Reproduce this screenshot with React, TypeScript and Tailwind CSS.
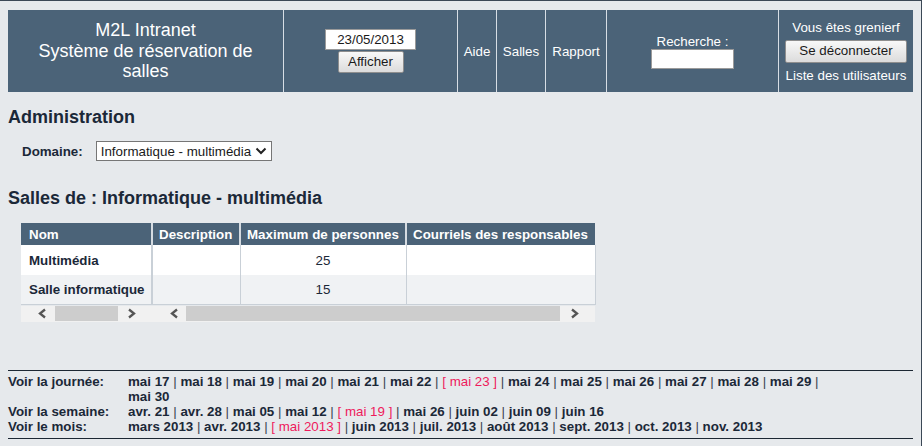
import React from "react";

const Chevron = ({ dir }: { dir: "l" | "r" }) => (
  <svg width="9" height="11" viewBox="0 0 9 11" className="block">
    <polyline
      points={dir === "l" ? "7,1.5 2,5.5 7,9.5" : "2,1.5 7,5.5 2,9.5"}
      fill="none"
      stroke="#555"
      strokeWidth="2.3"
    />
  </svg>
);

const btn =
  "h-[22px] border border-[#8e8e8e] rounded-[2px] bg-linear-to-b from-[#f8f8f8] to-[#dcdcdc] text-[#1a1a1a] text-[13.33px] leading-none flex items-center justify-center";

type Item = { t: string; cur?: boolean };

const Links = ({ items }: { items: Item[] }) => (
  <div>
    {items.map((it, i) => (
      <React.Fragment key={i}>
        {i > 0 && <span className="font-normal text-[#3a4250]"> | </span>}
        {it.cur ? (
          <span className="whitespace-nowrap font-normal text-[#ee1a5c]">[ {it.t} ]</span>
        ) : (
          <span className="whitespace-nowrap">{it.t}</span>
        )}
      </React.Fragment>
    ))}
  </div>
);

const jours: Item[] = [
  { t: "mai 17" },
  { t: "mai 18" },
  { t: "mai 19" },
  { t: "mai 20" },
  { t: "mai 21" },
  { t: "mai 22" },
  { t: "mai 23", cur: true },
  { t: "mai 24" },
  { t: "mai 25" },
  { t: "mai 26" },
  { t: "mai 27" },
  { t: "mai 28" },
  { t: "mai 29" },
  { t: "mai 30" },
];
const semaines: Item[] = [
  { t: "avr. 21" },
  { t: "avr. 28" },
  { t: "mai 05" },
  { t: "mai 12" },
  { t: "mai 19", cur: true },
  { t: "mai 26" },
  { t: "juin 02" },
  { t: "juin 09" },
  { t: "juin 16" },
];
const mois: Item[] = [
  { t: "mars 2013" },
  { t: "avr. 2013" },
  { t: "mai 2013", cur: true },
  { t: "juin 2013" },
  { t: "juil. 2013" },
  { t: "août 2013" },
  { t: "sept. 2013" },
  { t: "oct. 2013" },
  { t: "nov. 2013" },
];

export default function App() {
  return (
    <div
      className="w-[922px] min-h-[446px] bg-[#e6e9ec] border-t border-r border-[#3b4856] text-[#1b2838] text-[13.33px] leading-[15px]"
      style={{ fontFamily: '"Liberation Sans", Arial, sans-serif' }}
    >
      {/* Header */}
      <div className="mx-2 mt-[9px] flex h-[82px] w-[905px] bg-[#4b6378] text-white">
        <div className="w-[275px] flex items-center justify-center text-center text-[18px] leading-[20.5px]">
          <div>
            M2L Intranet
            <br />
            Système de réservation de
            <br />
            salles
          </div>
        </div>
        <div className="w-[174px] border-l border-[#d7dee5] flex flex-col items-center justify-center">
          <div className="w-[91px] h-[21px] bg-white border border-[#9a9a9a] text-[#1a1a1a] flex items-center justify-center">
            23/05/2013
          </div>
          <div className={`${btn} w-[66px] mt-px`}>Afficher</div>
        </div>
        <div className="w-[39px] border-l border-[#d7dee5] flex items-center justify-center">Aide</div>
        <div className="w-[49px] border-l border-[#d7dee5] flex items-center justify-center">Salles</div>
        <div className="w-[61px] border-l border-[#d7dee5] flex items-center justify-center">Rapport</div>
        <div className="w-[172px] border-l border-[#d7dee5] flex flex-col items-center justify-center">
          <div>Recherche :</div>
          <div className="w-[83px] h-[20px] bg-white border border-[#9a9a9a]" />
        </div>
        <div className="w-[135px] border-l border-[#d7dee5] flex flex-col items-center justify-center">
          <div>Vous êtes grenierf</div>
          <div className={`${btn} w-[122px] h-[23px] my-[5px]`}>Se déconnecter</div>
          <div className="whitespace-nowrap">Liste des utilisateurs</div>
        </div>
      </div>

      {/* Administration */}
      <h1 className="mx-2 mt-[15px] text-[18px] leading-[21px] font-bold">Administration</h1>
      <div className="ml-[22px] mt-[13px] flex items-center h-[20px]">
        <span className="font-bold">Domaine:</span>
        <div className="ml-[13px] w-[176px] h-[20px] bg-white border border-[#767676] flex items-center justify-between pl-[4px] pr-[4px] text-[#1a1a1a]">
          <span>Informatique - multimédia</span>
          <svg width="12" height="8" viewBox="0 0 12 8">
            <polyline points="1.5,1.5 6,6 10.5,1.5" fill="none" stroke="#222" strokeWidth="2" />
          </svg>
        </div>
      </div>

      <h2 className="mx-2 mt-[27px] text-[18px] leading-[21px] font-bold">
        Salles de : Informatique - multimédia
      </h2>

      {/* Table */}
      <div className="ml-[21px] mt-[14px] w-[574px]">
        <table className="w-[574px] table-fixed border-collapse">
          <colgroup>
            <col className="w-[131px]" />
            <col className="w-[88px]" />
            <col className="w-[166px]" />
            <col className="w-[189px]" />
          </colgroup>
          <thead>
            <tr className="h-[22px] bg-[#4b6378] text-white font-bold text-left">
              <th className="pl-2 pr-0 text-left whitespace-nowrap">Nom</th>
              <th className="pl-[6px] pr-0 text-left whitespace-nowrap border-l-2 border-[#d5dbe1]">Description</th>
              <th className="pl-[6px] pr-0 text-left whitespace-nowrap border-l-2 border-[#d5dbe1]">Maximum de personnes</th>
              <th className="pl-[6px] pr-0 text-left whitespace-nowrap border-l-2 border-[#d5dbe1]">Courriels des responsables</th>
            </tr>
          </thead>
          <tbody>
            <tr className="h-[30px] bg-white">
              <td className="pl-2 pr-0 font-bold whitespace-nowrap border-r-2 border-[#c9d0d7]">Multimédia</td>
              <td className="border-r border-[#c9d0d7]" />
              <td className="text-center border-r border-[#c9d0d7]">25</td>
              <td className="border-r border-[#c9d0d7]" />
            </tr>
            <tr className="h-[29px] bg-[#f0f2f4] border-b border-[#c9d0d7]">
              <td className="pl-2 pr-0 font-bold whitespace-nowrap border-r-2 border-[#c9d0d7]">Salle informatique</td>
              <td className="border-r border-[#c9d0d7]" />
              <td className="text-center border-r border-[#c9d0d7]">15</td>
              <td className="border-r border-[#c9d0d7]" />
            </tr>
          </tbody>
        </table>
        <div className="mt-px flex h-[16px] bg-[#f1f1f1] items-center">
          <div className="w-[131px] flex items-center h-full">
            <div className="w-[17px]" />
            <Chevron dir="l" />
            <div className="w-[8px]" />
            <div className="w-[63px] h-[15px] bg-[#cdcdcd]" />
            <div className="w-[9px]" />
            <Chevron dir="r" />
          </div>
          <div className="w-[443px] flex items-center h-full">
            <div className="w-[18px]" />
            <Chevron dir="l" />
            <div className="w-[7px]" />
            <div className="w-[374px] h-[15px] bg-[#cdcdcd]" />
            <div className="w-[10px]" />
            <Chevron dir="r" />
          </div>
        </div>
      </div>

      {/* Footer */}
      <div className="mx-2 mt-[48px] w-[905px] border-t border-b border-[#1c2733] pt-[3px] pb-[4px] font-bold">
        <div className="grid grid-cols-[120px_712px]">
          <div>Voir la journée:</div>
          <Links items={jours} />
          <div>Voir la semaine:</div>
          <Links items={semaines} />
          <div>Voir le mois:</div>
          <Links items={mois} />
        </div>
      </div>
    </div>
  );
}
